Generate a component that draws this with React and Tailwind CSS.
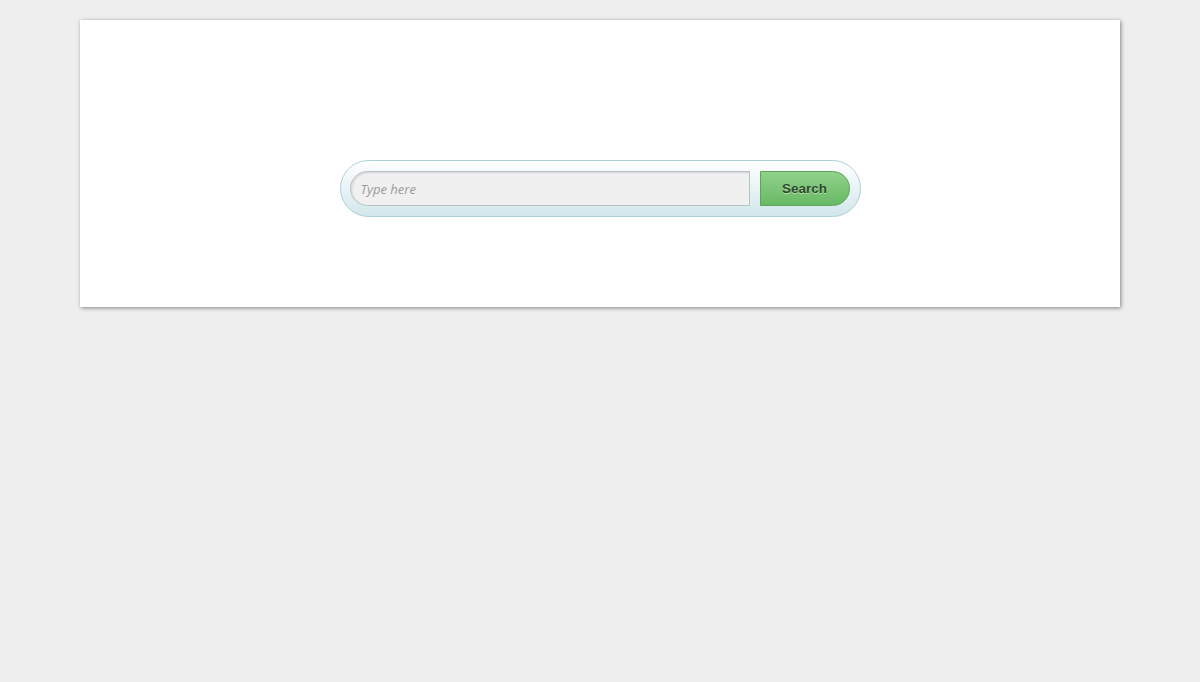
export default function App() {
  return (
    <div className="min-h-screen bg-[#eeeeee] pt-5 font-['Open_Sans',sans-serif]">
      <div className="mx-[80px] h-[287px] bg-white shadow-[1px_1px_4px_rgba(0,0,0,0.45)]">
        <div className="flex justify-center pt-[140px]">
          {/* search pill */}
          <form
            className="flex items-center gap-[10px] rounded-full border border-[#acd0d8] bg-gradient-to-b from-white to-[#d2e7ec] py-[10px] pl-[9px] pr-[10px] shadow-[inset_0_1px_0_#fff]"
            onSubmit={(e) => e.preventDefault()}
          >
            <input
              type="text"
              placeholder="Type here"
              className="h-[35px] w-[400px] rounded-l-full border border-[#b9c3c5] bg-[#f0f0f0] pl-[10px] text-[13px] italic text-[#555] placeholder:text-[#9a9a9a] shadow-[inset_1px_1px_2px_rgba(0,0,0,0.12)] outline-none"
            />
            <button
              type="submit"
              className="h-[35px] w-[90px] rounded-r-full border border-[#5fa35c] bg-gradient-to-b from-[#8fd28a] to-[#68b965] pt-[1px] font-['Liberation_Sans',Arial,sans-serif] text-[13.5px] font-bold text-[#2f4a2e] [text-shadow:0_1px_0_rgba(255,255,255,0.45)]"
            >
              Search
            </button>
          </form>
        </div>
      </div>
    </div>
  );
}
